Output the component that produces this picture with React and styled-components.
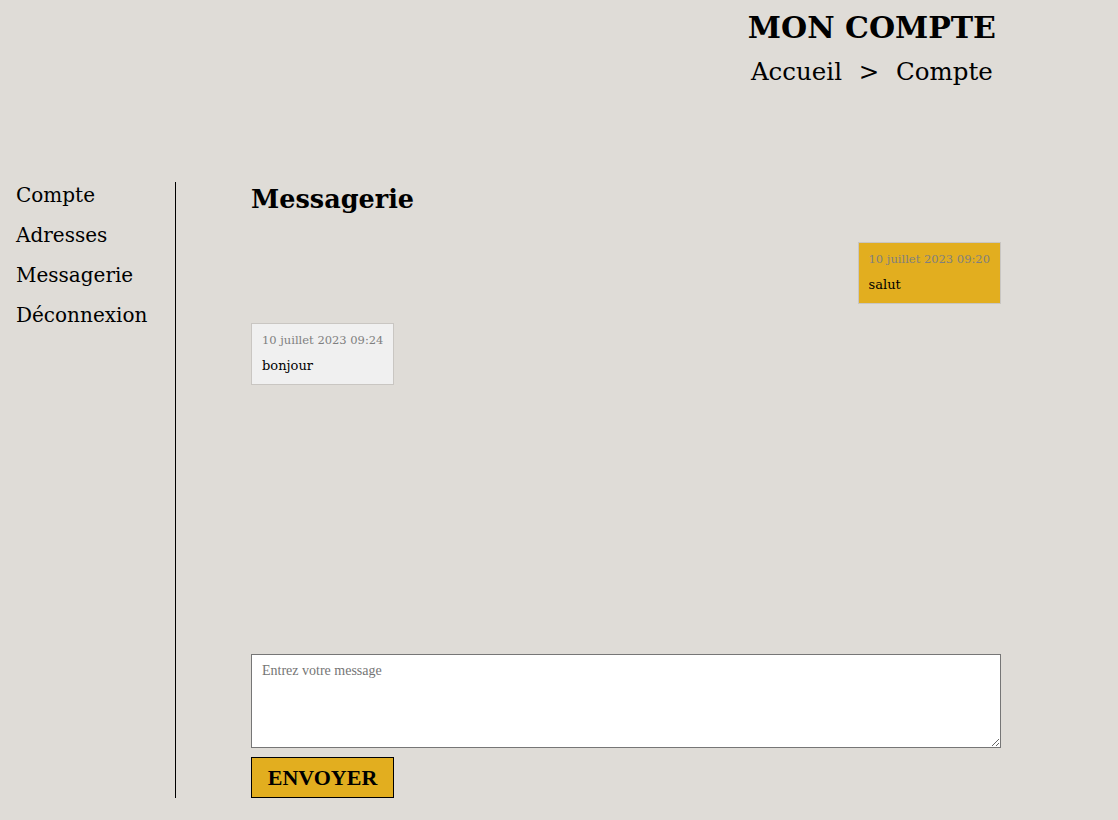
import React from "react";
import styled, { createGlobalStyle } from "styled-components";

const Global = createGlobalStyle`
  html, body { margin: 0; padding: 0; background: #dfdcd7; }
  body { font-family: Georgia, "DejaVu Serif", serif; color: #000; }
`;

const Page = styled.div`
  width: 1118px;
  min-height: 820px;
  background: #dfdcd7;
`;

const Header = styled.header`
  display: flex;
  justify-content: flex-end;
  padding: 10px 122px 0 0;
  height: 182px;
  box-sizing: border-box;
`;

const TitleBlock = styled.div`
  text-align: center;
`;

const Title = styled.h1`
  margin: 0;
  font-size: 30px;
  line-height: 36px;
  font-weight: bold;
`;

const Crumbs = styled.div`
  margin-top: 11px;
  font-size: 24.5px;
  line-height: 30px;
  word-spacing: 9px;
`;

const Body = styled.div`
  display: grid;
  grid-template-columns: 176px 825px;
`;

const Side = styled.nav`
  border-right: 1px solid #000;
  padding: 0 0 0 16px;
  display: flex;
  flex-direction: column;
  gap: 14px;
  height: 616px;
  box-sizing: border-box;
`;

const SideLink = styled.a`
  font-size: 20px;
  line-height: 26px;
  color: #000;
  text-decoration: none;
`;

const Main = styled.main`
  padding-left: 75px;
`;

const Heading = styled.h2`
  margin: 0;
  font-size: 25.5px;
  line-height: 34px;
  font-weight: bold;
`;

const List = styled.div`
  margin-top: 26px;
  height: 412px;
  display: flex;
  flex-direction: column;
  gap: 19px;
`;

const Bubble = styled.div`
  align-self: ${(p) => (p.$mine ? "flex-end" : "flex-start")};
  background: ${(p) => (p.$mine ? "#e2ae1f" : "#f0f0f0")};
  border: 1px solid #c9c6c2;
  padding: 9px 10px 10px;
`;

const Stamp = styled.div`
  font-size: 11.5px;
  line-height: 15px;
  color: #7f7f7f;
`;

const Text = styled.div`
  margin-top: 10px;
  font-size: 13px;
  line-height: 16px;
`;

const Input = styled.textarea`
  display: block;
  width: 750px;
  height: 94px;
  box-sizing: border-box;
  border: 1px solid #767676;
  background: #fff;
  padding: 8px 10px;
  font-family: "Liberation Serif", serif;
  font-size: 14px;
  resize: vertical;
  &::placeholder { color: #757575; }
`;

const Send = styled.button`
  margin-top: 9px;
  display: block;
  width: 143px;
  height: 41px;
  background: #e2ae1f;
  border: 1px solid #000;
  font-family: "Liberation Serif", serif;
  font-weight: bold;
  font-size: 22px;
  color: #000;
  padding: 0;
`;

export default function App() {
  return (
    <Page>
      <Global />
      <Header>
        <TitleBlock>
          <Title>MON COMPTE</Title>
          <Crumbs>Accueil &gt; Compte</Crumbs>
        </TitleBlock>
      </Header>
      <Body>
        <Side>
          <SideLink href="#">Compte</SideLink>
          <SideLink href="#">Adresses</SideLink>
          <SideLink href="#">Messagerie</SideLink>
          <SideLink href="#">Déconnexion</SideLink>
        </Side>
        <Main>
          <Heading>Messagerie</Heading>
          <List>
            <Bubble $mine>
              <Stamp>10 juillet 2023 09:20</Stamp>
              <Text>salut</Text>
            </Bubble>
            <Bubble>
              <Stamp>10 juillet 2023 09:24</Stamp>
              <Text>bonjour</Text>
            </Bubble>
          </List>
          <Input placeholder="Entrez votre message" />
          <Send>ENVOYER</Send>
        </Main>
      </Body>
    </Page>
  );
}
